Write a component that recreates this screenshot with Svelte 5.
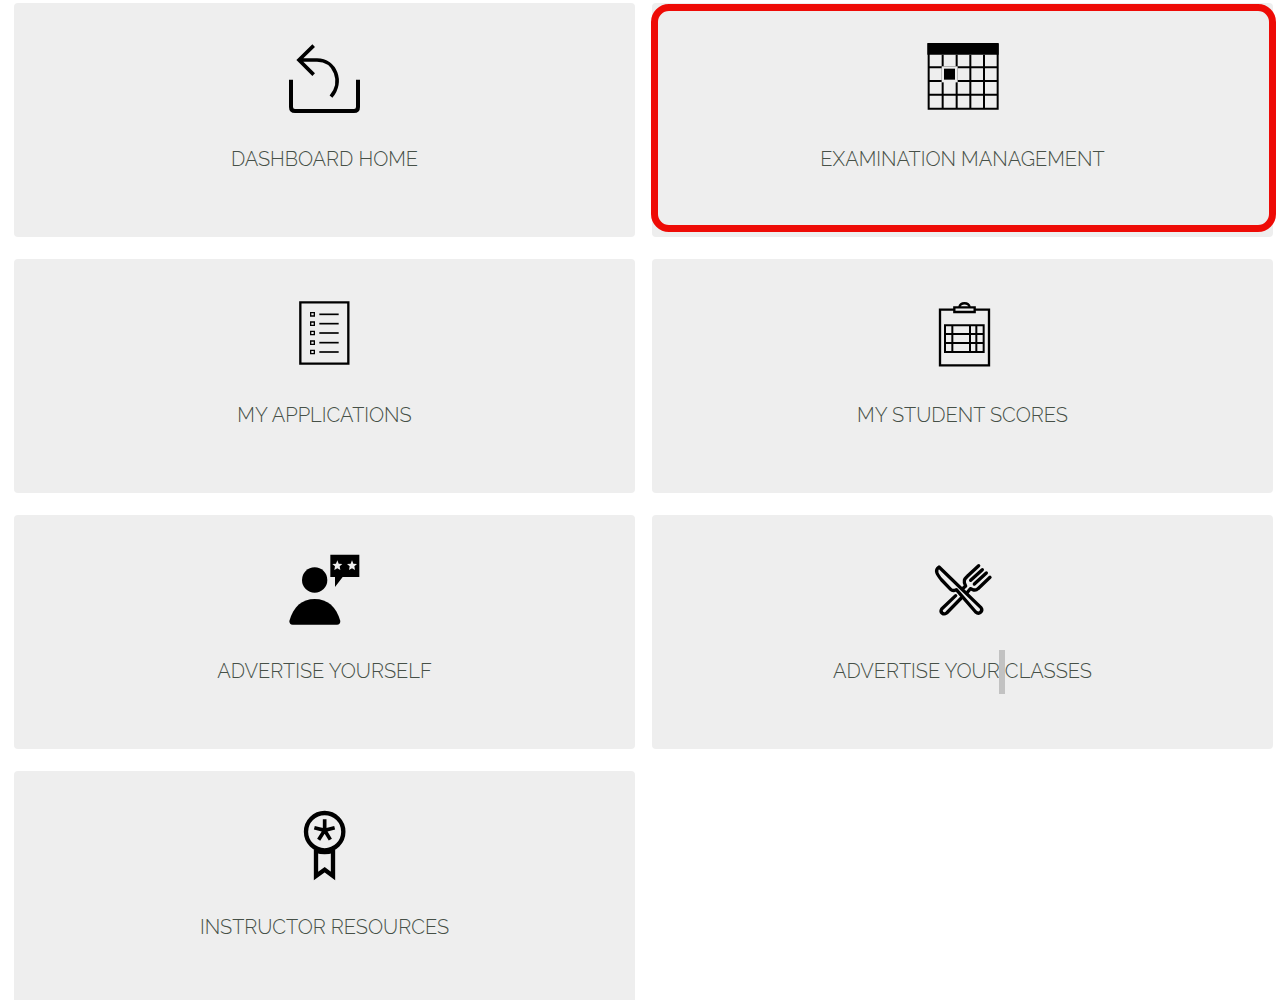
<script>
  const cards = [
    { id: 'home', label: 'Dashboard Home' },
    { id: 'exams', label: 'Examination Management', highlighted: true },
    { id: 'applications', label: 'My Applications' },
    { id: 'scores', label: 'My Student Scores' },
    { id: 'yourself', label: 'Advertise Yourself' },
    { id: 'classes', label: 'Advertise Your', rest: 'Classes' },
    { id: 'resources', label: 'Instructor Resources' }
  ];
  const star = 'M0 -15L4 -5L15 -4L7 3L9 14L0 9L-9 14L-7 3L-15 -4L-4 -5Z';
</script>

<main>
  {#each cards as card (card.id)}
    <a class="card" class:highlighted={card.highlighted} href={'#' + card.id}>
      <svg class="icon" viewBox="0 0 303 270" aria-hidden="true">
        {#if card.id === 'home'}
          <g class="line" transform="translate(0 6)" stroke-width="12">
            <path d="M51 131V213Q51 225 63 225H240Q252 225 252 213V131" />
            <path d="M119 29L75 72L119 116M76 72H129C184 72 209 138 171 182" stroke-width="11" />
          </g>
        {:else if card.id === 'exams'}
          <g transform="translate(3 -6)">
            <path d="M43 33H257V68H43Z" />
            <g class="line" stroke-width="6">
              <path d="M47 35V230H254V35" />
              <path d="M89 68V230M131 68V230M172 68V230M213 68V230M47 106H254M47 147H254M47 188H254" />
            </g>
            <path class="paper" d="M86 103H134V151H86Z" />
            <path d="M93 110H126V143H93Z" />
          </g>
        {:else if card.id === 'applications'}
          <g class="line" stroke-width="7">
            <path d="M79 37H223V221H79Z" />
            {#each [73, 101, 129, 158, 186] as y}
              <path d={`M110 ${y - 5}H121V${y + 5}H110Z`} stroke-width="4" />
              <path d={`M136 ${y}H194`} stroke-width="5" />
            {/each}
          </g>
        {:else if card.id === 'scores'}
          <g class="line" transform="translate(3 0)" stroke-width="7">
            <path d="M81 59H228V226H81Z" />
            <path class="paper" d="M124 52H185V66H124Z" />
            <path d="M139 51C142 36 167 36 170 51" />
            <path d="M96 106H212V186H96ZM96 132H212M96 159H212M118 106V186M171 106V186M190 106V186" stroke-width="6" />
          </g>
        {:else if card.id === 'yourself'}
          <g transform="translate(0 -3)">
            <circle cx="122" cy="105" r="38" />
            <path d="M46 228C58 185 84 162 122 162S187 185 199 228Q199 239 189 239H56Q46 239 46 228Z" />
            <path d="M169 29H256V96H206L183 126V96H169Z" />
            <path class="paper" d={star} transform="translate(190 61)" />
            <path class="paper" d={star} transform="translate(234 61)" />
          </g>
        {:else if card.id === 'classes'}
          <g class="line" transform="translate(3 -3)" stroke-width="10" stroke-linecap="round" stroke-linejoin="round">
            <path d="M128 152L86 192C80 202 91 211 101 204L145 159M147 133L158 123C149 106 156 101 163 94L197 62M173 106L208 74M184 117L220 84M231 97L195 131C185 141 179 132 172 131L161 145" />
            <path class="paper" d="M78 66C64 76 72 88 86 105L113 133C119 139 124 137 130 134L188 201C199 211 211 198 204 188Z" />
          </g>
        {:else}
          <g class="line" transform="translate(0 -6)" stroke-width="13">
            <circle cx="152" cy="95" r="56" />
            <path d="M126 148V228L152 209L177 228V148" />
            <path d="M126 152Q152 161 177 152" />
            <path d="M152 58V91M121 83L152 91L182 83M134 119L152 91L169 119" stroke-width="11" />
          </g>
        {/if}
      </svg>
      <span class="label">{card.label}{#if card.rest}{' '}<span class="rest">{card.rest}</span>{/if}</span>
    </a>
  {/each}
</main>

<style>
  :global(body) {
    margin: 0;
    background: #fff;
  }

  main {
    display: grid;
    grid-template-columns: 1fr 1fr;
    grid-auto-rows: minmax(234px, auto);
    gap: 22px 17px;
    padding: 3px 7px 0 14px;
  }

  .card {
    position: relative;
    box-sizing: border-box;
    display: flex;
    flex-direction: column;
    align-items: center;
    gap: 21px;
    padding-top: 31px;
    border-radius: 4px;
    background: #eee;
    color: #465047;
    text-decoration: none;
  }

  .highlighted::after {
    content: '';
    position: absolute;
    inset: 1px -3px 5px -1px;
    border: 7px solid #ee0b06;
    border-radius: 18px;
  }

  .icon {
    width: 101px;
    height: 90px;
    fill: #000;
  }

  .line {
    fill: none;
    stroke: #000;
  }

  .paper {
    fill: #eee;
  }

  .label {
    font: 300 20px/28px Raleway, Lato, 'Open Sans', sans-serif;
    text-transform: uppercase;
  }

  .rest {
    position: relative;
  }

  .rest::before {
    content: '';
    position: absolute;
    top: -9px;
    left: -6px;
    width: 6px;
    height: 44px;
    background: #c2c2c2;
  }
</style>
